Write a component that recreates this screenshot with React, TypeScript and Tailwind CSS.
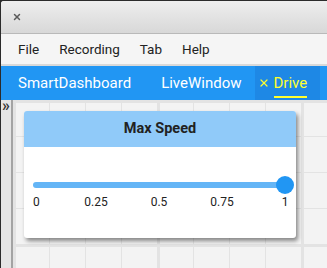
import { X } from 'lucide-react';

const ticks = ['0', '0.25', '0.5', '0.75', '1'];

export default function App() {
  return (
    <div className="w-[327px] h-[268px] overflow-hidden bg-[#2b2b2b] pl-px pt-px font-['Roboto',sans-serif]">
      <div className="flex h-full flex-col overflow-hidden rounded-tl-[3px] bg-[#f4f4f4]">
        {/* Title bar */}
        <div className="flex h-[33px] shrink-0 items-center border-b border-[#b9b9b9] bg-gradient-to-b from-[#eeeeee] to-[#d8d8d8] pl-[11px]">
          <X size={10} strokeWidth={3.5} className="text-[#5a5a5a]" />
        </div>

        {/* Menu bar */}
        <div className="flex h-[32px] shrink-0 items-center gap-[20px] border-b-2 border-[#d9d9d9] bg-[#f5f5f5] pl-[17px] text-[13.5px] text-[#222]">
          <span>File</span>
          <span>Recording</span>
          <span>Tab</span>
          <span>Help</span>
        </div>

        {/* Tab bar */}
        <div className="flex h-[34px] shrink-0 items-stretch bg-[#2196f3] text-[15px] text-white">
          <div className="flex items-center pl-[17px] pr-[15px]">SmartDashboard</div>
          <div className="flex items-center pl-[15px] pr-[13px]">LiveWindow</div>
          <div className="flex items-center gap-[4px] bg-[#1e88e5] pl-[3px] pr-[13px] text-[#ffff2e]">
            <X size={12} strokeWidth={2.4} />
            <span className="relative">
              Drive
              <span className="absolute -bottom-[4px] left-0 right-0 h-[2px] bg-[#ffff2e]" />
            </span>
          </div>
        </div>

        {/* Content */}
        <div className="flex min-h-0 flex-1">
          <div className="w-[10px] shrink-0 bg-[#e5e5e5] pl-[1px] text-[16px] font-semibold leading-[11px] text-[#333]">»</div>
          <div className="w-[2px] shrink-0 bg-[#a3a3a3]" />
          <div className="relative flex-1 bg-[#f3f3f3] bg-[linear-gradient(to_right,#e3e3e3_3px,transparent_3px),linear-gradient(to_bottom,#e3e3e3_3px,transparent_3px),linear-gradient(to_right,#e3e3e3_1px,transparent_1px),linear-gradient(to_bottom,#e3e3e3_1px,transparent_1px)] bg-[size:144px_144px,144px_144px,36px_36px,36px_36px]">
            {/* Widget card */}
            <div className="absolute left-[11px] top-[11px] w-[272px] overflow-hidden rounded-[3px] bg-white shadow-[2px_3px_4px_rgba(0,0,0,0.45)]">
              <div className="flex h-[36px] items-center justify-center bg-[#90caf9] text-[14.5px] font-bold text-[#222]">
                Max Speed
              </div>
              <div className="h-[91px] px-[9px] pt-[33px]">
                <div className="relative mr-[2px] h-[10px]">
                  <div className="absolute left-0 right-0 top-[2px] h-[6px] rounded-full bg-[#64b5f6]" />
                  <div className="absolute -right-[9px] -top-[4px] h-[18px] w-[18px] rounded-full bg-[#2196f3]" />
                </div>
                <div className="mr-[2px] mt-[3px] flex justify-between text-[12px] text-[#222]">
                  {ticks.map((t, i) => (
                    <div key={t} className={`flex w-0 ${i === 0 ? 'justify-start' : 'justify-center'}`}>
                      <span className="whitespace-nowrap">{t}</span>
                    </div>
                  ))}
                </div>
              </div>
            </div>
          </div>
        </div>
      </div>
    </div>
  );
}
